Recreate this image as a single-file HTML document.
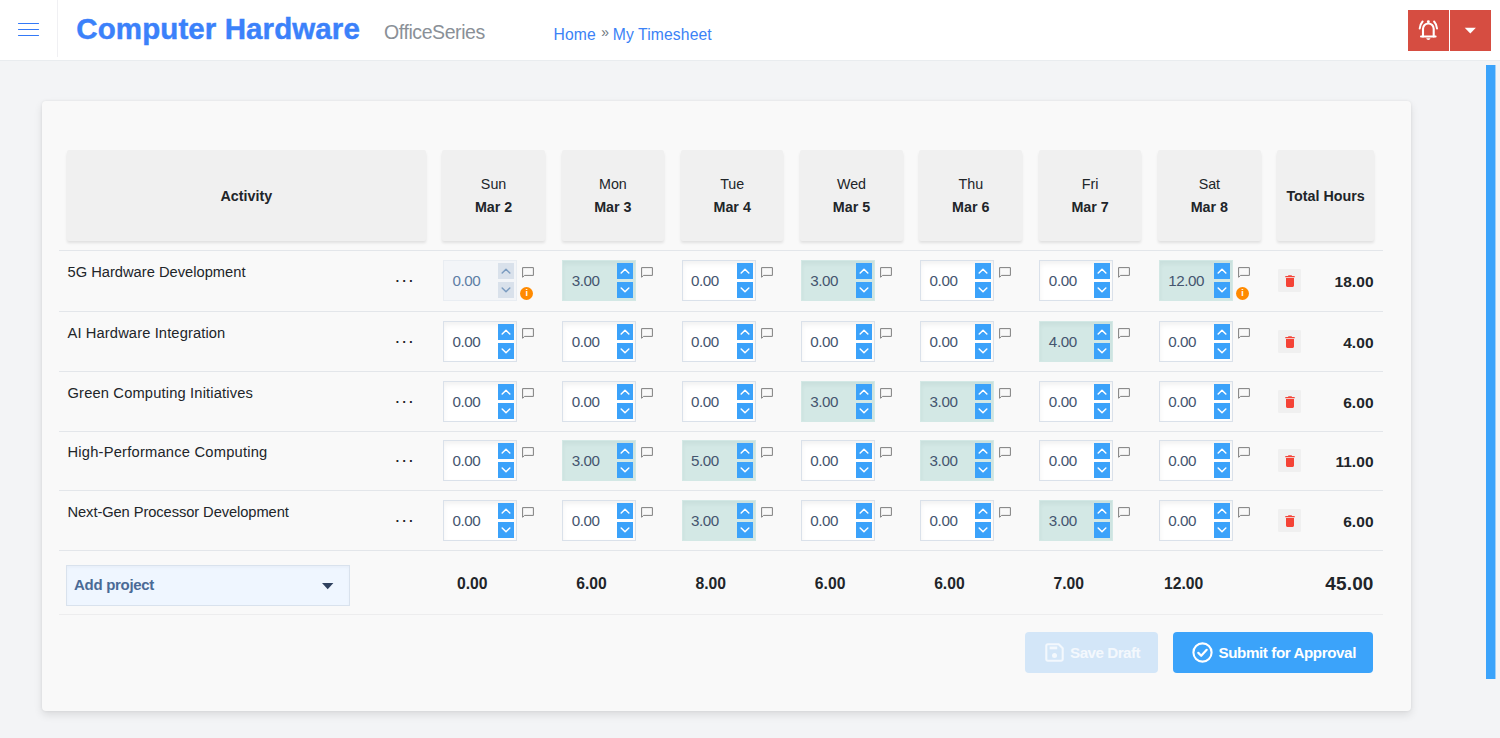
<!DOCTYPE html>
<html lang="en">
<head>
<meta charset="utf-8">
<title>My Timesheet - Computer Hardware</title>
<style>
*{box-sizing:border-box}
html,body{margin:0;padding:0}
body{width:1500px;height:738px;overflow:hidden;background:#f3f4f6;font-family:"Liberation Sans",sans-serif;color:#212529;position:relative;font-size:14.5px}
button{font-family:inherit;border:0;padding:0;margin:0;background:none;cursor:pointer}
.topbar{position:absolute;left:0;top:0;width:1500px;height:61px;background:#fff;border-bottom:1px solid #e9ecef}
.menu-btn{position:absolute;left:12px;top:16px;width:34px;height:26px;line-height:0}
.vsep{position:absolute;left:57px;top:0;width:1px;height:57px;background:#f0f0f3}
.brand{position:absolute;left:76.300px;top:10px;margin:0;font-size:29.500px;line-height:38px;font-weight:700;color:#3b81fa;white-space:nowrap;letter-spacing:.1px;-webkit-text-stroke:.45px #3b81fa}
.product{position:absolute;left:384px;top:20.400px;letter-spacing:-.42px;font-size:19.500px;line-height:24px;color:#8a9097;white-space:nowrap}
.crumbs{position:absolute;left:553.500px;top:23.700px;letter-spacing:.12px;font-size:15.700px;line-height:22px;color:#3b82f6;white-space:nowrap}
.crumbs a{color:#3b82f6;text-decoration:none}
.crumbs .sep{color:#6c757d;display:inline-block;margin:0 3.500px 0 5.500px;font-size:14px;position:relative;top:-2.500px}
.actions{position:absolute;left:1408px;top:10px;display:flex;gap:1px}
.rbtn{width:41px;height:41px;background:#d64d41;display:flex;align-items:center;justify-content:center}
.scrollbar{position:absolute;left:1486px;top:65px;width:10px;height:614px;background:linear-gradient(to right,#3ba3fb 9px,rgba(59,163,251,.45) 9px)}
.card{position:absolute;left:42px;top:101px;width:1369px;height:610px;background:#f9f9f9;border-radius:4px;box-shadow:0 4px 8px rgba(0,0,0,.10),0 0 3px rgba(0,0,0,.07)}
.sheet{position:absolute;left:17px;top:41px;width:1323.500px}
.hrow,.row,.frow{display:flex;width:1323.500px}
.hcell{height:108px;padding:8px 8.600px 8.500px 8.100px}
.act{width:375.200px}
.day{width:119.300px}
.tot{width:113.200px}
.hbox{height:91px;background:#f0f0f0;border-radius:2px;box-shadow:0 2.500px 3px -.6px rgba(0,0,0,.10);padding-top:1.200px;display:flex;flex-direction:column;align-items:center;justify-content:center;font-size:14.300px;line-height:23px;color:#212529}
.hbox b{font-weight:700}
.hrow{height:108px}
.row{height:60px;border-top:1px solid #e3e6ea;position:relative}
.row:nth-child(2){height:61px}
.row:nth-child(5){height:59px}
.row:nth-child(5) .cell{top:-1px}
.cell{position:relative;height:100%}
.name{position:absolute;left:8.500px;top:11px;font-size:14.700px;line-height:20px;white-space:nowrap;color:#212529}
.dots{position:absolute;left:335.800px;top:14.600px;font-size:19px;letter-spacing:1.400px;line-height:20px;color:#212529}
.num{position:absolute;left:8.800px;top:9px;width:74px;height:41px;background:#fff;border:1px solid #dae1ea;box-shadow:inset 0 3px 5px rgba(0,0,0,.055)}
.num.fill{background:#d3e8e5;border-color:#d3e8e5;box-shadow:inset 0 3px 4px rgba(0,60,50,.05)}
.num.dis{background:#f3f5f8;border-color:#e9edf2;box-shadow:none}
.val{position:absolute;left:8.400px;top:10px;font-size:15.200px;letter-spacing:-.42px;line-height:20px;color:#44556f}
.dis .val{color:#5d7da5}
.spin{position:absolute;right:2px;top:2px;width:16px;display:flex;flex-direction:column;gap:3px}
.spin i{display:flex;align-items:center;justify-content:center;width:16px;height:16px;background:#3ba2fa;color:#fff}
.dis .spin i{background:#d9e1eb;color:#7b9cc0}
.cmt{position:absolute;left:87.800px;top:16px}
.info{position:absolute;left:86px;top:36.400px;width:13.100px;height:13.100px;border-radius:50%;background:#ff8a00;color:#fff;font-size:9px;font-weight:700;line-height:13.100px;text-align:center;font-family:"Liberation Sans",sans-serif}
.del{position:absolute;left:8.500px;top:18px;width:23px;height:23px;background:#f0f0f0;border-radius:1px;padding-left:.5px;display:flex;align-items:center;justify-content:center}
.rt{position:absolute;right:8.900px;top:20.800px;font-size:15.500px;letter-spacing:.05px;line-height:20px;font-weight:700;white-space:nowrap;color:#212529}
.frow{height:65px;border-top:1px solid #e3e6ea;border-bottom:1px solid #ededee}
.select{position:absolute;left:7px;top:14px;width:284px;height:41px;background:#eff6ff;border:1px solid #d9e2ed;box-shadow:inset 0 2px 3px rgba(0,0,50,.03);display:flex;align-items:center;padding-left:7px;padding-bottom:2.400px;color:#4a6a96;font-size:15px;letter-spacing:-.3px}
.select svg{position:absolute;left:255.300px;top:17px}
.dt{position:absolute;left:8.500px;top:22.700px;width:44.800px;text-align:right;font-size:15.700px;line-height:20px;white-space:nowrap;color:#212529}
.gt{position:absolute;right:8.900px;top:20.600px;font-size:19px;letter-spacing:.15px;line-height:24px;color:#212529}
.btns{position:relative;height:60px}
.btn{position:absolute;top:17px;height:40.500px;border-radius:4px;color:#fff;font-weight:700;font-size:15.200px;letter-spacing:-.42px;display:flex;align-items:center;white-space:nowrap}
.btn.save{left:966px;width:133px;background:#d3e6f8;color:#f3f8fd;padding-left:19.500px}
.btn.save span{margin-left:6.500px;letter-spacing:-.5px}
.btn.submit{left:1113.500px;width:200.500px;background:#3ba3fa;padding-left:19px}
.btn.submit span{margin-left:6px}
.row:nth-child(3) .name{letter-spacing:.12px}
.row:nth-child(4) .name{letter-spacing:.16px}
.row:nth-child(5) .name{letter-spacing:.22px}
.row:nth-child(6) .name{letter-spacing:-.08px}
</style>
</head>
<body>
<header class="topbar">
  <button class="menu-btn" aria-label="Menu"><svg width="34" height="26" viewBox="0 0 34 26"><path d="M6.500 7.500h20M6.500 13.500h20M6.500 19.500h20" stroke="#3479f7" stroke-width="1.200" stroke-linecap="round" fill="none"/></svg></button>
  <div class="vsep"></div>
  <h1 class="brand">Computer Hardware</h1>
  <span class="product">OfficeSeries</span>
  <nav class="crumbs"><a class="c1">Home</a><span class="sep">&raquo;</span><a class="c2">My Timesheet</a></nav>
  <div class="actions">
    <button class="rbtn bell" aria-label="Notifications"><svg width="41" height="41" viewBox="0 0 41 41" fill="none" stroke="#fff" stroke-linecap="round" stroke-linejoin="round"><path d="M15 26.400V18.800a5.350 5.350 0 0 1 10.700 0v7.600" stroke-width="2.100"/><path d="M13 26.500h14.600" stroke-width="2"/><circle cx="20.350" cy="11.700" r="1.450" fill="#fff" stroke="none"/><path d="M18.200 28.200a2.200 2.200 0 0 0 4.300 0z" fill="#fff" stroke="none"/><path d="M14.600 11.500Q11.900 14.500 11.700 18.500" stroke-width="2"/><path d="M26.100 11.500Q28.800 14.500 29 18.500" stroke-width="2"/></svg></button>
    <button class="rbtn caret" aria-label="More"><svg width="41" height="41" viewBox="0 0 41 41"><path d="M14.700 17.800h11.200l-5.600 5.800z" fill="#fff"/></svg></button>
  </div>
</header>
<div class="scrollbar"></div>
<main class="card">
  <section class="sheet">
    <div class="hrow">
      <div class="hcell act"><div class="hbox"><b>Activity</b></div></div>
      <div class="hcell day"><div class="hbox"><span>Sun</span><b>Mar 2</b></div></div>
      <div class="hcell day"><div class="hbox"><span>Mon</span><b>Mar 3</b></div></div>
      <div class="hcell day"><div class="hbox"><span>Tue</span><b>Mar 4</b></div></div>
      <div class="hcell day"><div class="hbox"><span>Wed</span><b>Mar 5</b></div></div>
      <div class="hcell day"><div class="hbox"><span>Thu</span><b>Mar 6</b></div></div>
      <div class="hcell day"><div class="hbox"><span>Fri</span><b>Mar 7</b></div></div>
      <div class="hcell day"><div class="hbox"><span>Sat</span><b>Mar 8</b></div></div>
      <div class="hcell tot"><div class="hbox"><b>Total Hours</b></div></div>
    </div>
    <div class="row">
      <div class="cell act"><span class="name">5G Hardware Development</span><span class="dots">...</span></div>
      <div class="cell day"><div class="num dis"><span class="val">0.00</span><span class="spin"><i><svg width="10" height="6" viewBox="0 0 10 6"><path d="M1.2 5L5 1.3 8.8 5" fill="none" stroke="currentColor" stroke-width="1.5" stroke-linecap="round" stroke-linejoin="round"/></svg></i><i><svg width="10" height="6" viewBox="0 0 10 6"><path d="M1.2 1L5 4.7 8.8 1" fill="none" stroke="currentColor" stroke-width="1.5" stroke-linecap="round" stroke-linejoin="round"/></svg></i></span></div><svg class="cmt" width="13" height="12" viewBox="0 0 13 12"><path d="M0.600 10.300V0.600h10.800v7.800H2.500z" fill="none" stroke="#727272" stroke-width=".9" stroke-linejoin="round"/></svg><span class="info">i</span></div>
      <div class="cell day"><div class="num fill"><span class="val">3.00</span><span class="spin"><i><svg width="10" height="6" viewBox="0 0 10 6"><path d="M1.2 5L5 1.3 8.8 5" fill="none" stroke="currentColor" stroke-width="1.5" stroke-linecap="round" stroke-linejoin="round"/></svg></i><i><svg width="10" height="6" viewBox="0 0 10 6"><path d="M1.2 1L5 4.7 8.8 1" fill="none" stroke="currentColor" stroke-width="1.5" stroke-linecap="round" stroke-linejoin="round"/></svg></i></span></div><svg class="cmt" width="13" height="12" viewBox="0 0 13 12"><path d="M0.600 10.300V0.600h10.800v7.800H2.500z" fill="none" stroke="#727272" stroke-width=".9" stroke-linejoin="round"/></svg></div>
      <div class="cell day"><div class="num"><span class="val">0.00</span><span class="spin"><i><svg width="10" height="6" viewBox="0 0 10 6"><path d="M1.2 5L5 1.3 8.8 5" fill="none" stroke="currentColor" stroke-width="1.5" stroke-linecap="round" stroke-linejoin="round"/></svg></i><i><svg width="10" height="6" viewBox="0 0 10 6"><path d="M1.2 1L5 4.7 8.8 1" fill="none" stroke="currentColor" stroke-width="1.5" stroke-linecap="round" stroke-linejoin="round"/></svg></i></span></div><svg class="cmt" width="13" height="12" viewBox="0 0 13 12"><path d="M0.600 10.300V0.600h10.800v7.800H2.500z" fill="none" stroke="#727272" stroke-width=".9" stroke-linejoin="round"/></svg></div>
      <div class="cell day"><div class="num fill"><span class="val">3.00</span><span class="spin"><i><svg width="10" height="6" viewBox="0 0 10 6"><path d="M1.2 5L5 1.3 8.8 5" fill="none" stroke="currentColor" stroke-width="1.5" stroke-linecap="round" stroke-linejoin="round"/></svg></i><i><svg width="10" height="6" viewBox="0 0 10 6"><path d="M1.2 1L5 4.7 8.8 1" fill="none" stroke="currentColor" stroke-width="1.5" stroke-linecap="round" stroke-linejoin="round"/></svg></i></span></div><svg class="cmt" width="13" height="12" viewBox="0 0 13 12"><path d="M0.600 10.300V0.600h10.800v7.800H2.500z" fill="none" stroke="#727272" stroke-width=".9" stroke-linejoin="round"/></svg></div>
      <div class="cell day"><div class="num"><span class="val">0.00</span><span class="spin"><i><svg width="10" height="6" viewBox="0 0 10 6"><path d="M1.2 5L5 1.3 8.8 5" fill="none" stroke="currentColor" stroke-width="1.5" stroke-linecap="round" stroke-linejoin="round"/></svg></i><i><svg width="10" height="6" viewBox="0 0 10 6"><path d="M1.2 1L5 4.7 8.8 1" fill="none" stroke="currentColor" stroke-width="1.5" stroke-linecap="round" stroke-linejoin="round"/></svg></i></span></div><svg class="cmt" width="13" height="12" viewBox="0 0 13 12"><path d="M0.600 10.300V0.600h10.800v7.800H2.500z" fill="none" stroke="#727272" stroke-width=".9" stroke-linejoin="round"/></svg></div>
      <div class="cell day"><div class="num"><span class="val">0.00</span><span class="spin"><i><svg width="10" height="6" viewBox="0 0 10 6"><path d="M1.2 5L5 1.3 8.8 5" fill="none" stroke="currentColor" stroke-width="1.5" stroke-linecap="round" stroke-linejoin="round"/></svg></i><i><svg width="10" height="6" viewBox="0 0 10 6"><path d="M1.2 1L5 4.7 8.8 1" fill="none" stroke="currentColor" stroke-width="1.5" stroke-linecap="round" stroke-linejoin="round"/></svg></i></span></div><svg class="cmt" width="13" height="12" viewBox="0 0 13 12"><path d="M0.600 10.300V0.600h10.800v7.800H2.500z" fill="none" stroke="#727272" stroke-width=".9" stroke-linejoin="round"/></svg></div>
      <div class="cell day"><div class="num fill"><span class="val">12.00</span><span class="spin"><i><svg width="10" height="6" viewBox="0 0 10 6"><path d="M1.2 5L5 1.3 8.8 5" fill="none" stroke="currentColor" stroke-width="1.5" stroke-linecap="round" stroke-linejoin="round"/></svg></i><i><svg width="10" height="6" viewBox="0 0 10 6"><path d="M1.2 1L5 4.7 8.8 1" fill="none" stroke="currentColor" stroke-width="1.5" stroke-linecap="round" stroke-linejoin="round"/></svg></i></span></div><svg class="cmt" width="13" height="12" viewBox="0 0 13 12"><path d="M0.600 10.300V0.600h10.800v7.800H2.500z" fill="none" stroke="#727272" stroke-width=".9" stroke-linejoin="round"/></svg><span class="info">i</span></div>
      <div class="cell tot"><button class="del" aria-label="Delete"><svg width="10" height="12" viewBox="0 0 10 12"><path d="M0.3 0.9h2.6l0.6-0.7h3l0.6 0.7h2.6v1.3H0.3z M1 3h8v7.6a1.3 1.3 0 0 1-1.3 1.3H2.3A1.3 1.3 0 0 1 1 10.6z" fill="#f44336"/></svg></button><b class="rt">18.00</b></div>
    </div>
    <div class="row">
      <div class="cell act"><span class="name">AI Hardware Integration</span><span class="dots">...</span></div>
      <div class="cell day"><div class="num"><span class="val">0.00</span><span class="spin"><i><svg width="10" height="6" viewBox="0 0 10 6"><path d="M1.2 5L5 1.3 8.8 5" fill="none" stroke="currentColor" stroke-width="1.5" stroke-linecap="round" stroke-linejoin="round"/></svg></i><i><svg width="10" height="6" viewBox="0 0 10 6"><path d="M1.2 1L5 4.7 8.8 1" fill="none" stroke="currentColor" stroke-width="1.5" stroke-linecap="round" stroke-linejoin="round"/></svg></i></span></div><svg class="cmt" width="13" height="12" viewBox="0 0 13 12"><path d="M0.600 10.300V0.600h10.800v7.800H2.500z" fill="none" stroke="#727272" stroke-width=".9" stroke-linejoin="round"/></svg></div>
      <div class="cell day"><div class="num"><span class="val">0.00</span><span class="spin"><i><svg width="10" height="6" viewBox="0 0 10 6"><path d="M1.2 5L5 1.3 8.8 5" fill="none" stroke="currentColor" stroke-width="1.5" stroke-linecap="round" stroke-linejoin="round"/></svg></i><i><svg width="10" height="6" viewBox="0 0 10 6"><path d="M1.2 1L5 4.7 8.8 1" fill="none" stroke="currentColor" stroke-width="1.5" stroke-linecap="round" stroke-linejoin="round"/></svg></i></span></div><svg class="cmt" width="13" height="12" viewBox="0 0 13 12"><path d="M0.600 10.300V0.600h10.800v7.800H2.500z" fill="none" stroke="#727272" stroke-width=".9" stroke-linejoin="round"/></svg></div>
      <div class="cell day"><div class="num"><span class="val">0.00</span><span class="spin"><i><svg width="10" height="6" viewBox="0 0 10 6"><path d="M1.2 5L5 1.3 8.8 5" fill="none" stroke="currentColor" stroke-width="1.5" stroke-linecap="round" stroke-linejoin="round"/></svg></i><i><svg width="10" height="6" viewBox="0 0 10 6"><path d="M1.2 1L5 4.7 8.8 1" fill="none" stroke="currentColor" stroke-width="1.5" stroke-linecap="round" stroke-linejoin="round"/></svg></i></span></div><svg class="cmt" width="13" height="12" viewBox="0 0 13 12"><path d="M0.600 10.300V0.600h10.800v7.800H2.500z" fill="none" stroke="#727272" stroke-width=".9" stroke-linejoin="round"/></svg></div>
      <div class="cell day"><div class="num"><span class="val">0.00</span><span class="spin"><i><svg width="10" height="6" viewBox="0 0 10 6"><path d="M1.2 5L5 1.3 8.8 5" fill="none" stroke="currentColor" stroke-width="1.5" stroke-linecap="round" stroke-linejoin="round"/></svg></i><i><svg width="10" height="6" viewBox="0 0 10 6"><path d="M1.2 1L5 4.7 8.8 1" fill="none" stroke="currentColor" stroke-width="1.5" stroke-linecap="round" stroke-linejoin="round"/></svg></i></span></div><svg class="cmt" width="13" height="12" viewBox="0 0 13 12"><path d="M0.600 10.300V0.600h10.800v7.800H2.500z" fill="none" stroke="#727272" stroke-width=".9" stroke-linejoin="round"/></svg></div>
      <div class="cell day"><div class="num"><span class="val">0.00</span><span class="spin"><i><svg width="10" height="6" viewBox="0 0 10 6"><path d="M1.2 5L5 1.3 8.8 5" fill="none" stroke="currentColor" stroke-width="1.5" stroke-linecap="round" stroke-linejoin="round"/></svg></i><i><svg width="10" height="6" viewBox="0 0 10 6"><path d="M1.2 1L5 4.7 8.8 1" fill="none" stroke="currentColor" stroke-width="1.5" stroke-linecap="round" stroke-linejoin="round"/></svg></i></span></div><svg class="cmt" width="13" height="12" viewBox="0 0 13 12"><path d="M0.600 10.300V0.600h10.800v7.800H2.500z" fill="none" stroke="#727272" stroke-width=".9" stroke-linejoin="round"/></svg></div>
      <div class="cell day"><div class="num fill"><span class="val">4.00</span><span class="spin"><i><svg width="10" height="6" viewBox="0 0 10 6"><path d="M1.2 5L5 1.3 8.8 5" fill="none" stroke="currentColor" stroke-width="1.5" stroke-linecap="round" stroke-linejoin="round"/></svg></i><i><svg width="10" height="6" viewBox="0 0 10 6"><path d="M1.2 1L5 4.7 8.8 1" fill="none" stroke="currentColor" stroke-width="1.5" stroke-linecap="round" stroke-linejoin="round"/></svg></i></span></div><svg class="cmt" width="13" height="12" viewBox="0 0 13 12"><path d="M0.600 10.300V0.600h10.800v7.800H2.500z" fill="none" stroke="#727272" stroke-width=".9" stroke-linejoin="round"/></svg></div>
      <div class="cell day"><div class="num"><span class="val">0.00</span><span class="spin"><i><svg width="10" height="6" viewBox="0 0 10 6"><path d="M1.2 5L5 1.3 8.8 5" fill="none" stroke="currentColor" stroke-width="1.5" stroke-linecap="round" stroke-linejoin="round"/></svg></i><i><svg width="10" height="6" viewBox="0 0 10 6"><path d="M1.2 1L5 4.7 8.8 1" fill="none" stroke="currentColor" stroke-width="1.5" stroke-linecap="round" stroke-linejoin="round"/></svg></i></span></div><svg class="cmt" width="13" height="12" viewBox="0 0 13 12"><path d="M0.600 10.300V0.600h10.800v7.800H2.500z" fill="none" stroke="#727272" stroke-width=".9" stroke-linejoin="round"/></svg></div>
      <div class="cell tot"><button class="del" aria-label="Delete"><svg width="10" height="12" viewBox="0 0 10 12"><path d="M0.3 0.9h2.6l0.6-0.7h3l0.6 0.7h2.6v1.3H0.3z M1 3h8v7.6a1.3 1.3 0 0 1-1.3 1.3H2.3A1.3 1.3 0 0 1 1 10.6z" fill="#f44336"/></svg></button><b class="rt">4.00</b></div>
    </div>
    <div class="row">
      <div class="cell act"><span class="name">Green Computing Initiatives</span><span class="dots">...</span></div>
      <div class="cell day"><div class="num"><span class="val">0.00</span><span class="spin"><i><svg width="10" height="6" viewBox="0 0 10 6"><path d="M1.2 5L5 1.3 8.8 5" fill="none" stroke="currentColor" stroke-width="1.5" stroke-linecap="round" stroke-linejoin="round"/></svg></i><i><svg width="10" height="6" viewBox="0 0 10 6"><path d="M1.2 1L5 4.7 8.8 1" fill="none" stroke="currentColor" stroke-width="1.5" stroke-linecap="round" stroke-linejoin="round"/></svg></i></span></div><svg class="cmt" width="13" height="12" viewBox="0 0 13 12"><path d="M0.600 10.300V0.600h10.800v7.800H2.500z" fill="none" stroke="#727272" stroke-width=".9" stroke-linejoin="round"/></svg></div>
      <div class="cell day"><div class="num"><span class="val">0.00</span><span class="spin"><i><svg width="10" height="6" viewBox="0 0 10 6"><path d="M1.2 5L5 1.3 8.8 5" fill="none" stroke="currentColor" stroke-width="1.5" stroke-linecap="round" stroke-linejoin="round"/></svg></i><i><svg width="10" height="6" viewBox="0 0 10 6"><path d="M1.2 1L5 4.7 8.8 1" fill="none" stroke="currentColor" stroke-width="1.5" stroke-linecap="round" stroke-linejoin="round"/></svg></i></span></div><svg class="cmt" width="13" height="12" viewBox="0 0 13 12"><path d="M0.600 10.300V0.600h10.800v7.800H2.500z" fill="none" stroke="#727272" stroke-width=".9" stroke-linejoin="round"/></svg></div>
      <div class="cell day"><div class="num"><span class="val">0.00</span><span class="spin"><i><svg width="10" height="6" viewBox="0 0 10 6"><path d="M1.2 5L5 1.3 8.8 5" fill="none" stroke="currentColor" stroke-width="1.5" stroke-linecap="round" stroke-linejoin="round"/></svg></i><i><svg width="10" height="6" viewBox="0 0 10 6"><path d="M1.2 1L5 4.7 8.8 1" fill="none" stroke="currentColor" stroke-width="1.5" stroke-linecap="round" stroke-linejoin="round"/></svg></i></span></div><svg class="cmt" width="13" height="12" viewBox="0 0 13 12"><path d="M0.600 10.300V0.600h10.800v7.800H2.500z" fill="none" stroke="#727272" stroke-width=".9" stroke-linejoin="round"/></svg></div>
      <div class="cell day"><div class="num fill"><span class="val">3.00</span><span class="spin"><i><svg width="10" height="6" viewBox="0 0 10 6"><path d="M1.2 5L5 1.3 8.8 5" fill="none" stroke="currentColor" stroke-width="1.5" stroke-linecap="round" stroke-linejoin="round"/></svg></i><i><svg width="10" height="6" viewBox="0 0 10 6"><path d="M1.2 1L5 4.7 8.8 1" fill="none" stroke="currentColor" stroke-width="1.5" stroke-linecap="round" stroke-linejoin="round"/></svg></i></span></div><svg class="cmt" width="13" height="12" viewBox="0 0 13 12"><path d="M0.600 10.300V0.600h10.800v7.800H2.500z" fill="none" stroke="#727272" stroke-width=".9" stroke-linejoin="round"/></svg></div>
      <div class="cell day"><div class="num fill"><span class="val">3.00</span><span class="spin"><i><svg width="10" height="6" viewBox="0 0 10 6"><path d="M1.2 5L5 1.3 8.8 5" fill="none" stroke="currentColor" stroke-width="1.5" stroke-linecap="round" stroke-linejoin="round"/></svg></i><i><svg width="10" height="6" viewBox="0 0 10 6"><path d="M1.2 1L5 4.7 8.8 1" fill="none" stroke="currentColor" stroke-width="1.5" stroke-linecap="round" stroke-linejoin="round"/></svg></i></span></div><svg class="cmt" width="13" height="12" viewBox="0 0 13 12"><path d="M0.600 10.300V0.600h10.800v7.800H2.500z" fill="none" stroke="#727272" stroke-width=".9" stroke-linejoin="round"/></svg></div>
      <div class="cell day"><div class="num"><span class="val">0.00</span><span class="spin"><i><svg width="10" height="6" viewBox="0 0 10 6"><path d="M1.2 5L5 1.3 8.8 5" fill="none" stroke="currentColor" stroke-width="1.5" stroke-linecap="round" stroke-linejoin="round"/></svg></i><i><svg width="10" height="6" viewBox="0 0 10 6"><path d="M1.2 1L5 4.7 8.8 1" fill="none" stroke="currentColor" stroke-width="1.5" stroke-linecap="round" stroke-linejoin="round"/></svg></i></span></div><svg class="cmt" width="13" height="12" viewBox="0 0 13 12"><path d="M0.600 10.300V0.600h10.800v7.800H2.500z" fill="none" stroke="#727272" stroke-width=".9" stroke-linejoin="round"/></svg></div>
      <div class="cell day"><div class="num"><span class="val">0.00</span><span class="spin"><i><svg width="10" height="6" viewBox="0 0 10 6"><path d="M1.2 5L5 1.3 8.8 5" fill="none" stroke="currentColor" stroke-width="1.5" stroke-linecap="round" stroke-linejoin="round"/></svg></i><i><svg width="10" height="6" viewBox="0 0 10 6"><path d="M1.2 1L5 4.7 8.8 1" fill="none" stroke="currentColor" stroke-width="1.5" stroke-linecap="round" stroke-linejoin="round"/></svg></i></span></div><svg class="cmt" width="13" height="12" viewBox="0 0 13 12"><path d="M0.600 10.300V0.600h10.800v7.800H2.500z" fill="none" stroke="#727272" stroke-width=".9" stroke-linejoin="round"/></svg></div>
      <div class="cell tot"><button class="del" aria-label="Delete"><svg width="10" height="12" viewBox="0 0 10 12"><path d="M0.3 0.9h2.6l0.6-0.7h3l0.6 0.7h2.6v1.3H0.3z M1 3h8v7.6a1.3 1.3 0 0 1-1.3 1.3H2.3A1.3 1.3 0 0 1 1 10.6z" fill="#f44336"/></svg></button><b class="rt">6.00</b></div>
    </div>
    <div class="row">
      <div class="cell act"><span class="name">High-Performance Computing</span><span class="dots">...</span></div>
      <div class="cell day"><div class="num"><span class="val">0.00</span><span class="spin"><i><svg width="10" height="6" viewBox="0 0 10 6"><path d="M1.2 5L5 1.3 8.8 5" fill="none" stroke="currentColor" stroke-width="1.5" stroke-linecap="round" stroke-linejoin="round"/></svg></i><i><svg width="10" height="6" viewBox="0 0 10 6"><path d="M1.2 1L5 4.7 8.8 1" fill="none" stroke="currentColor" stroke-width="1.5" stroke-linecap="round" stroke-linejoin="round"/></svg></i></span></div><svg class="cmt" width="13" height="12" viewBox="0 0 13 12"><path d="M0.600 10.300V0.600h10.800v7.800H2.500z" fill="none" stroke="#727272" stroke-width=".9" stroke-linejoin="round"/></svg></div>
      <div class="cell day"><div class="num fill"><span class="val">3.00</span><span class="spin"><i><svg width="10" height="6" viewBox="0 0 10 6"><path d="M1.2 5L5 1.3 8.8 5" fill="none" stroke="currentColor" stroke-width="1.5" stroke-linecap="round" stroke-linejoin="round"/></svg></i><i><svg width="10" height="6" viewBox="0 0 10 6"><path d="M1.2 1L5 4.7 8.8 1" fill="none" stroke="currentColor" stroke-width="1.5" stroke-linecap="round" stroke-linejoin="round"/></svg></i></span></div><svg class="cmt" width="13" height="12" viewBox="0 0 13 12"><path d="M0.600 10.300V0.600h10.800v7.800H2.500z" fill="none" stroke="#727272" stroke-width=".9" stroke-linejoin="round"/></svg></div>
      <div class="cell day"><div class="num fill"><span class="val">5.00</span><span class="spin"><i><svg width="10" height="6" viewBox="0 0 10 6"><path d="M1.2 5L5 1.3 8.8 5" fill="none" stroke="currentColor" stroke-width="1.5" stroke-linecap="round" stroke-linejoin="round"/></svg></i><i><svg width="10" height="6" viewBox="0 0 10 6"><path d="M1.2 1L5 4.7 8.8 1" fill="none" stroke="currentColor" stroke-width="1.5" stroke-linecap="round" stroke-linejoin="round"/></svg></i></span></div><svg class="cmt" width="13" height="12" viewBox="0 0 13 12"><path d="M0.600 10.300V0.600h10.800v7.800H2.500z" fill="none" stroke="#727272" stroke-width=".9" stroke-linejoin="round"/></svg></div>
      <div class="cell day"><div class="num"><span class="val">0.00</span><span class="spin"><i><svg width="10" height="6" viewBox="0 0 10 6"><path d="M1.2 5L5 1.3 8.8 5" fill="none" stroke="currentColor" stroke-width="1.5" stroke-linecap="round" stroke-linejoin="round"/></svg></i><i><svg width="10" height="6" viewBox="0 0 10 6"><path d="M1.2 1L5 4.7 8.8 1" fill="none" stroke="currentColor" stroke-width="1.5" stroke-linecap="round" stroke-linejoin="round"/></svg></i></span></div><svg class="cmt" width="13" height="12" viewBox="0 0 13 12"><path d="M0.600 10.300V0.600h10.800v7.800H2.500z" fill="none" stroke="#727272" stroke-width=".9" stroke-linejoin="round"/></svg></div>
      <div class="cell day"><div class="num fill"><span class="val">3.00</span><span class="spin"><i><svg width="10" height="6" viewBox="0 0 10 6"><path d="M1.2 5L5 1.3 8.8 5" fill="none" stroke="currentColor" stroke-width="1.5" stroke-linecap="round" stroke-linejoin="round"/></svg></i><i><svg width="10" height="6" viewBox="0 0 10 6"><path d="M1.2 1L5 4.7 8.8 1" fill="none" stroke="currentColor" stroke-width="1.5" stroke-linecap="round" stroke-linejoin="round"/></svg></i></span></div><svg class="cmt" width="13" height="12" viewBox="0 0 13 12"><path d="M0.600 10.300V0.600h10.800v7.800H2.500z" fill="none" stroke="#727272" stroke-width=".9" stroke-linejoin="round"/></svg></div>
      <div class="cell day"><div class="num"><span class="val">0.00</span><span class="spin"><i><svg width="10" height="6" viewBox="0 0 10 6"><path d="M1.2 5L5 1.3 8.8 5" fill="none" stroke="currentColor" stroke-width="1.5" stroke-linecap="round" stroke-linejoin="round"/></svg></i><i><svg width="10" height="6" viewBox="0 0 10 6"><path d="M1.2 1L5 4.7 8.8 1" fill="none" stroke="currentColor" stroke-width="1.5" stroke-linecap="round" stroke-linejoin="round"/></svg></i></span></div><svg class="cmt" width="13" height="12" viewBox="0 0 13 12"><path d="M0.600 10.300V0.600h10.800v7.800H2.500z" fill="none" stroke="#727272" stroke-width=".9" stroke-linejoin="round"/></svg></div>
      <div class="cell day"><div class="num"><span class="val">0.00</span><span class="spin"><i><svg width="10" height="6" viewBox="0 0 10 6"><path d="M1.2 5L5 1.3 8.8 5" fill="none" stroke="currentColor" stroke-width="1.5" stroke-linecap="round" stroke-linejoin="round"/></svg></i><i><svg width="10" height="6" viewBox="0 0 10 6"><path d="M1.2 1L5 4.7 8.8 1" fill="none" stroke="currentColor" stroke-width="1.5" stroke-linecap="round" stroke-linejoin="round"/></svg></i></span></div><svg class="cmt" width="13" height="12" viewBox="0 0 13 12"><path d="M0.600 10.300V0.600h10.800v7.800H2.500z" fill="none" stroke="#727272" stroke-width=".9" stroke-linejoin="round"/></svg></div>
      <div class="cell tot"><button class="del" aria-label="Delete"><svg width="10" height="12" viewBox="0 0 10 12"><path d="M0.3 0.9h2.6l0.6-0.7h3l0.6 0.7h2.6v1.3H0.3z M1 3h8v7.6a1.3 1.3 0 0 1-1.3 1.3H2.3A1.3 1.3 0 0 1 1 10.6z" fill="#f44336"/></svg></button><b class="rt">11.00</b></div>
    </div>
    <div class="row">
      <div class="cell act"><span class="name">Next-Gen Processor Development</span><span class="dots">...</span></div>
      <div class="cell day"><div class="num"><span class="val">0.00</span><span class="spin"><i><svg width="10" height="6" viewBox="0 0 10 6"><path d="M1.2 5L5 1.3 8.8 5" fill="none" stroke="currentColor" stroke-width="1.5" stroke-linecap="round" stroke-linejoin="round"/></svg></i><i><svg width="10" height="6" viewBox="0 0 10 6"><path d="M1.2 1L5 4.7 8.8 1" fill="none" stroke="currentColor" stroke-width="1.5" stroke-linecap="round" stroke-linejoin="round"/></svg></i></span></div><svg class="cmt" width="13" height="12" viewBox="0 0 13 12"><path d="M0.600 10.300V0.600h10.800v7.800H2.500z" fill="none" stroke="#727272" stroke-width=".9" stroke-linejoin="round"/></svg></div>
      <div class="cell day"><div class="num"><span class="val">0.00</span><span class="spin"><i><svg width="10" height="6" viewBox="0 0 10 6"><path d="M1.2 5L5 1.3 8.8 5" fill="none" stroke="currentColor" stroke-width="1.5" stroke-linecap="round" stroke-linejoin="round"/></svg></i><i><svg width="10" height="6" viewBox="0 0 10 6"><path d="M1.2 1L5 4.7 8.8 1" fill="none" stroke="currentColor" stroke-width="1.5" stroke-linecap="round" stroke-linejoin="round"/></svg></i></span></div><svg class="cmt" width="13" height="12" viewBox="0 0 13 12"><path d="M0.600 10.300V0.600h10.800v7.800H2.500z" fill="none" stroke="#727272" stroke-width=".9" stroke-linejoin="round"/></svg></div>
      <div class="cell day"><div class="num fill"><span class="val">3.00</span><span class="spin"><i><svg width="10" height="6" viewBox="0 0 10 6"><path d="M1.2 5L5 1.3 8.8 5" fill="none" stroke="currentColor" stroke-width="1.5" stroke-linecap="round" stroke-linejoin="round"/></svg></i><i><svg width="10" height="6" viewBox="0 0 10 6"><path d="M1.2 1L5 4.7 8.8 1" fill="none" stroke="currentColor" stroke-width="1.5" stroke-linecap="round" stroke-linejoin="round"/></svg></i></span></div><svg class="cmt" width="13" height="12" viewBox="0 0 13 12"><path d="M0.600 10.300V0.600h10.800v7.800H2.500z" fill="none" stroke="#727272" stroke-width=".9" stroke-linejoin="round"/></svg></div>
      <div class="cell day"><div class="num"><span class="val">0.00</span><span class="spin"><i><svg width="10" height="6" viewBox="0 0 10 6"><path d="M1.2 5L5 1.3 8.8 5" fill="none" stroke="currentColor" stroke-width="1.5" stroke-linecap="round" stroke-linejoin="round"/></svg></i><i><svg width="10" height="6" viewBox="0 0 10 6"><path d="M1.2 1L5 4.7 8.8 1" fill="none" stroke="currentColor" stroke-width="1.5" stroke-linecap="round" stroke-linejoin="round"/></svg></i></span></div><svg class="cmt" width="13" height="12" viewBox="0 0 13 12"><path d="M0.600 10.300V0.600h10.800v7.800H2.500z" fill="none" stroke="#727272" stroke-width=".9" stroke-linejoin="round"/></svg></div>
      <div class="cell day"><div class="num"><span class="val">0.00</span><span class="spin"><i><svg width="10" height="6" viewBox="0 0 10 6"><path d="M1.2 5L5 1.3 8.8 5" fill="none" stroke="currentColor" stroke-width="1.5" stroke-linecap="round" stroke-linejoin="round"/></svg></i><i><svg width="10" height="6" viewBox="0 0 10 6"><path d="M1.2 1L5 4.7 8.8 1" fill="none" stroke="currentColor" stroke-width="1.5" stroke-linecap="round" stroke-linejoin="round"/></svg></i></span></div><svg class="cmt" width="13" height="12" viewBox="0 0 13 12"><path d="M0.600 10.300V0.600h10.800v7.800H2.500z" fill="none" stroke="#727272" stroke-width=".9" stroke-linejoin="round"/></svg></div>
      <div class="cell day"><div class="num fill"><span class="val">3.00</span><span class="spin"><i><svg width="10" height="6" viewBox="0 0 10 6"><path d="M1.2 5L5 1.3 8.8 5" fill="none" stroke="currentColor" stroke-width="1.5" stroke-linecap="round" stroke-linejoin="round"/></svg></i><i><svg width="10" height="6" viewBox="0 0 10 6"><path d="M1.2 1L5 4.7 8.8 1" fill="none" stroke="currentColor" stroke-width="1.5" stroke-linecap="round" stroke-linejoin="round"/></svg></i></span></div><svg class="cmt" width="13" height="12" viewBox="0 0 13 12"><path d="M0.600 10.300V0.600h10.800v7.800H2.500z" fill="none" stroke="#727272" stroke-width=".9" stroke-linejoin="round"/></svg></div>
      <div class="cell day"><div class="num"><span class="val">0.00</span><span class="spin"><i><svg width="10" height="6" viewBox="0 0 10 6"><path d="M1.2 5L5 1.3 8.8 5" fill="none" stroke="currentColor" stroke-width="1.5" stroke-linecap="round" stroke-linejoin="round"/></svg></i><i><svg width="10" height="6" viewBox="0 0 10 6"><path d="M1.2 1L5 4.7 8.8 1" fill="none" stroke="currentColor" stroke-width="1.5" stroke-linecap="round" stroke-linejoin="round"/></svg></i></span></div><svg class="cmt" width="13" height="12" viewBox="0 0 13 12"><path d="M0.600 10.300V0.600h10.800v7.800H2.500z" fill="none" stroke="#727272" stroke-width=".9" stroke-linejoin="round"/></svg></div>
      <div class="cell tot"><button class="del" aria-label="Delete"><svg width="10" height="12" viewBox="0 0 10 12"><path d="M0.3 0.9h2.6l0.6-0.7h3l0.6 0.7h2.6v1.3H0.3z M1 3h8v7.6a1.3 1.3 0 0 1-1.3 1.3H2.3A1.3 1.3 0 0 1 1 10.6z" fill="#f44336"/></svg></button><b class="rt">6.00</b></div>
    </div>
    <div class="frow">
      <div class="cell act"><div class="select"><b>Add project</b><svg width="12" height="7" viewBox="0 0 12 7"><path d="M0 0h11.400L5.700 6.200z" fill="#2f415f"/></svg></div></div>
      <div class="cell day"><b class="dt">0.00</b></div>
      <div class="cell day"><b class="dt">6.00</b></div>
      <div class="cell day"><b class="dt">8.00</b></div>
      <div class="cell day"><b class="dt">6.00</b></div>
      <div class="cell day"><b class="dt">6.00</b></div>
      <div class="cell day"><b class="dt">7.00</b></div>
      <div class="cell day"><b class="dt">12.00</b></div>
      <div class="cell tot"><b class="gt">45.00</b></div>
    </div>
    <div class="btns">
      <button class="btn save"><svg width="19" height="19" viewBox="0 0 19 19" fill="none" stroke="#f3f8fd" stroke-width="2.100" stroke-linejoin="round"><path d="M1.300 2.700a1.400 1.400 0 0 1 1.400-1.400h11l4 4v11a1.400 1.400 0 0 1-1.400 1.400H2.700a1.400 1.400 0 0 1-1.400-1.400z"/><path d="M4.600 4.900h7.600" stroke-width="2.800"/><circle cx="9.500" cy="12.600" r="2.500" fill="#f3f8fd" stroke="none"/></svg><span>Save Draft</span></button>
      <button class="btn submit"><svg width="21" height="21" viewBox="0 0 21 21" fill="none" stroke="#fff" stroke-width="2.100" stroke-linecap="round" stroke-linejoin="round"><circle cx="10.500" cy="10.500" r="9.100"/><path d="M6.300 10.900l2.900 2.900 5.500-6" stroke-width="2.200"/></svg><span>Submit for Approval</span></button>
    </div>
  </section>
</main>
</body>
</html>
